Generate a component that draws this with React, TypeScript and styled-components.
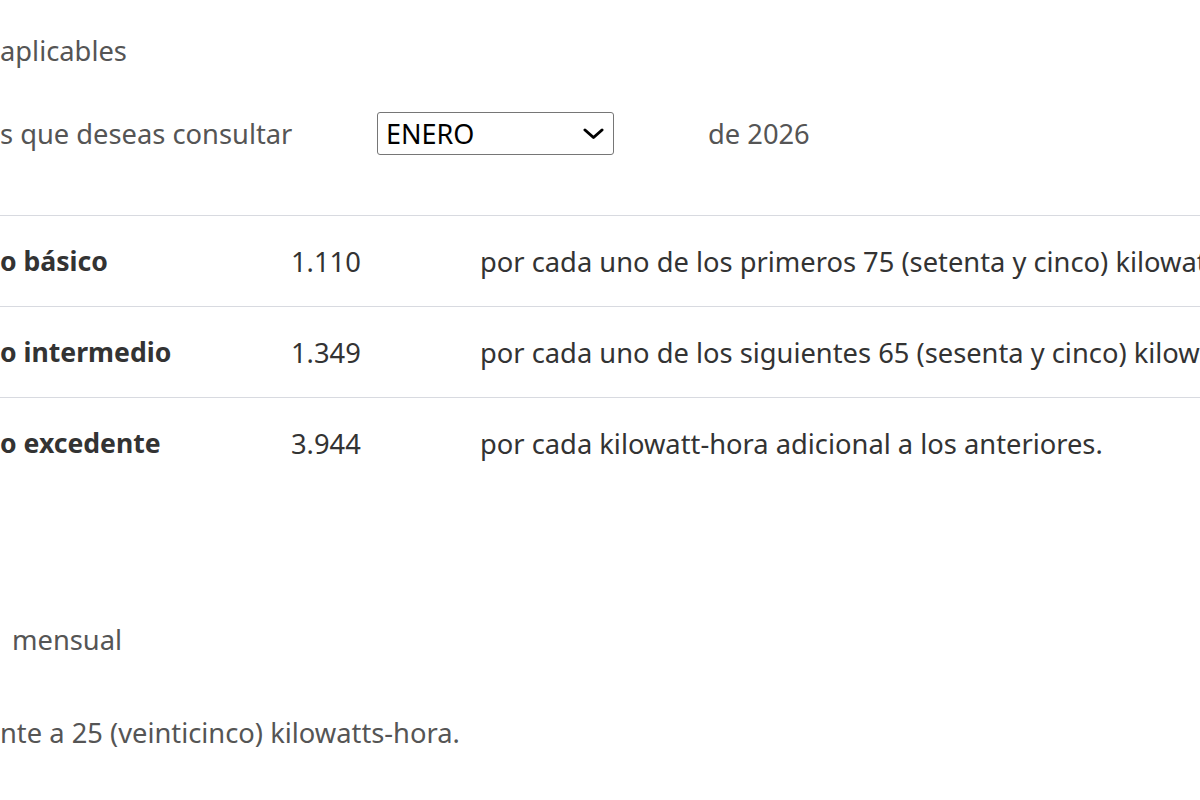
import styled, { createGlobalStyle } from "styled-components";

const GlobalStyle = createGlobalStyle`
  html, body {
    margin: 0;
    padding: 0;
    background: #ffffff;
    overflow: hidden;
  }
  body {
    font-family: "Noto Sans", "Open Sans", Arial, sans-serif;
    font-size: 27.3px;
    color: #555555;
  }
`;

const Page = styled.div`
  width: 1200px;
  height: 800px;
  overflow: hidden;
  padding-top: 31px;
  white-space: nowrap;
  box-sizing: border-box;
`;

const SectionTitle = styled.div<{ $indent?: number }>`
  line-height: 40px;
  color: #555555;
  padding-left: ${(p) => p.$indent ?? 0}px;
`;

const MonthRow = styled.div`
  display: flex;
  align-items: center;
  height: 43px;
  margin-top: 41px;
`;

const MonthLabel = styled.div`
  width: 377px;
  line-height: 40px;
  color: #555555;
`;

const SelectWrap = styled.div`
  position: relative;
  width: 237px;
  height: 43px;
`;

const MonthSelect = styled.select`
  appearance: none;
  -webkit-appearance: none;
  width: 100%;
  height: 100%;
  box-sizing: border-box;
  border: 1px solid #767676;
  border-radius: 3px;
  background: #ffffff;
  padding: 0 0 0 8px;
  font-family: "Noto Sans", Arial, sans-serif;
  font-size: 27px;
  color: #000000;
  outline: none;
`;

const Chevron = styled.svg`
  position: absolute;
  right: 10px;
  top: 16px;
  width: 21px;
  height: 12px;
  pointer-events: none;
`;

const YearText = styled.div`
  margin-left: 94px;
  line-height: 40px;
  color: #555555;
`;

const RateTable = styled.div`
  margin-top: 60px;
  display: flex;
  flex-direction: column;
`;

const RateRow = styled.div`
  display: grid;
  grid-template-columns: 291px 189px 1fr;
  align-items: center;
  height: 90px;
  border-top: 1px solid #d8dae0;
  color: #333333;
`;

const RateName = styled.div`
  font-weight: 700;
  font-size: 26.6px;
`;

const RateValue = styled.div``;

const RateDesc = styled.div``;

const NotesBlock = styled.div`
  margin-top: 132px;
  display: flex;
  flex-direction: column;
  gap: 53px;
`;

const rates = [
  {
    name: "o básico",
    value: "1.110",
    desc: "por cada uno de los primeros 75 (setenta y cinco) kilowatts-hora.",
  },
  {
    name: "o intermedio",
    value: "1.349",
    desc: "por cada uno de los siguientes 65 (sesenta y cinco) kilowatts-hora.",
  },
  {
    name: "o excedente",
    value: "3.944",
    desc: "por cada kilowatt-hora adicional a los anteriores.",
  },
];

export default function App() {
  return (
    <>
      <GlobalStyle />
      <Page>
        <SectionTitle>aplicables</SectionTitle>
        <MonthRow>
          <MonthLabel>s que deseas consultar</MonthLabel>
          <SelectWrap>
            <MonthSelect defaultValue="ENERO">
              <option>ENERO</option>
              <option>FEBRERO</option>
              <option>MARZO</option>
            </MonthSelect>
            <Chevron viewBox="0 0 21 12" fill="none">
              <path
                d="M2 2 L10.5 9.5 L19 2"
                stroke="#000"
                strokeWidth="3"
                strokeLinecap="round"
                strokeLinejoin="round"
              />
            </Chevron>
          </SelectWrap>
          <YearText>de 2026</YearText>
        </MonthRow>
        <RateTable>
          {rates.map((r) => (
            <RateRow key={r.value}>
              <RateName>{r.name}</RateName>
              <RateValue>{r.value}</RateValue>
              <RateDesc>{r.desc}</RateDesc>
            </RateRow>
          ))}
        </RateTable>
        <NotesBlock>
          <SectionTitle $indent={12}>mensual</SectionTitle>
          <SectionTitle>nte a 25 (veinticinco) kilowatts-hora.</SectionTitle>
        </NotesBlock>
      </Page>
    </>
  );
}
